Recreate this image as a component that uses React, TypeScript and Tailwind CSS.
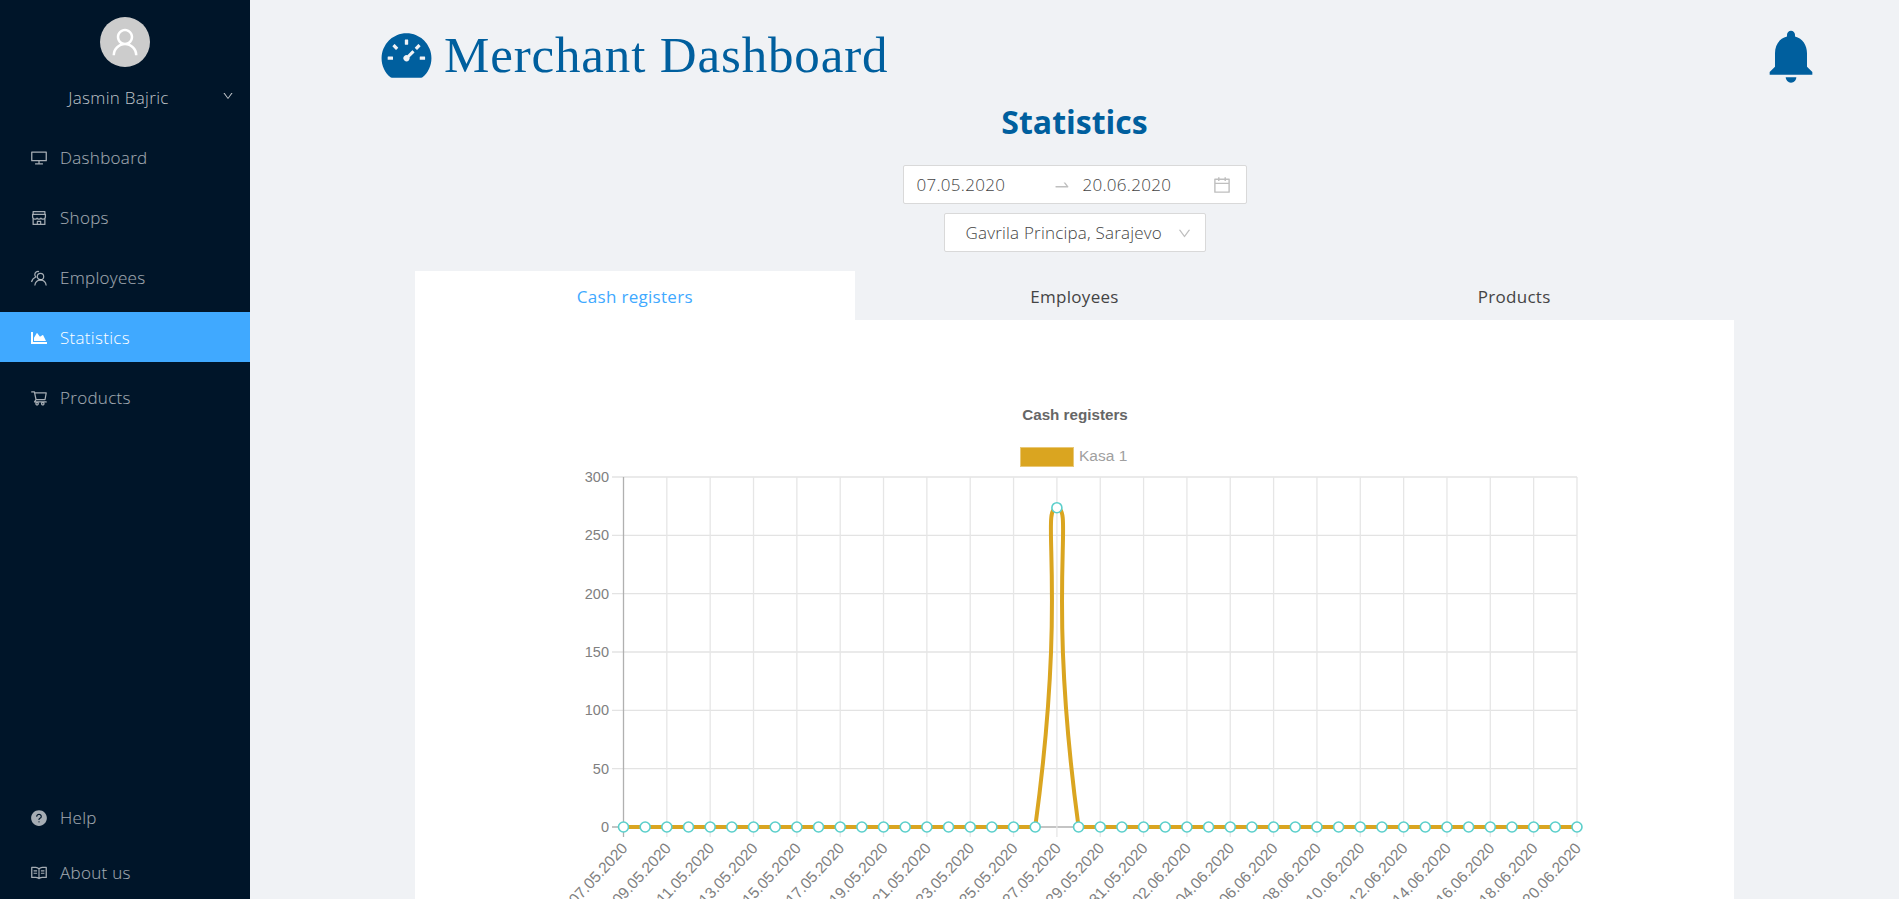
import React from 'react';
import {
  AiFillDashboard,
  AiFillQuestionCircle,
  AiOutlineCalendar,
  AiOutlineDesktop,
  AiOutlineDown,
  AiOutlineRead,
  AiOutlineShop,
  AiOutlineShoppingCart,
  AiOutlineSwapRight,
  AiOutlineUser,
} from 'react-icons/ai';
import { FaChartArea } from 'react-icons/fa';
import { MdNotifications } from 'react-icons/md';

const EmployeesIcon = () => (
  <svg viewBox="0 0 18 18" width="18" height="18" fill="none" stroke="currentColor" strokeWidth="1.2">
    <circle cx="10.5" cy="7.5" r="3.2" />
    <path d="M4.8 16.5c.4-3.2 2.6-5.4 5.7-5.4s5.300 2.200 5.700 5.400" />
    <path d="M9 2.600A3.200 3.200 0 0 0 4.800 5.600c0 1 .4 1.800 1 2.400-2.200.9-3.700 2.800-4.300 5" />
  </svg>
);

const menuItems = [
  { label: 'Dashboard', icon: <AiOutlineDesktop size={18} /> },
  { label: 'Shops', icon: <AiOutlineShop size={18} /> },
  { label: 'Employees', icon: <EmployeesIcon /> },
  { label: 'Statistics', icon: <FaChartArea size={16} />, active: true },
  { label: 'Products', icon: <AiOutlineShoppingCart size={18} /> },
];

const Sidebar = () => (
  <aside className="flex h-full w-[250px] shrink-0 flex-col justify-between bg-[#001529] text-[17px] font-light tracking-[0.3px] text-white/65">
    <div>
      <div className="flex justify-center pt-[17px]">
        <div className="flex h-[50px] w-[50px] items-center justify-center rounded-full bg-[#cccccc] text-white">
          <AiOutlineUser size={34} />
        </div>
      </div>
      <div className="relative mt-[17px] flex h-7 items-center justify-center pr-[13px] text-white/75">
        Jasmin Bajric
        <AiOutlineDown size={12} className="absolute right-[16px] top-[6px]" />
      </div>
      <nav className="mt-[20px] flex flex-col gap-2.5">
        {menuItems.map((item) => (
          <div
            key={item.label}
            className={`flex h-[50px] items-center gap-[12px] pl-[30px] pt-[2px] ${item.active ? 'bg-[#40a9ff] text-white' : ''}`}
          >
            <span className="flex w-[18px] justify-center">{item.icon}</span>
            {item.label}
          </div>
        ))}
      </nav>
    </div>
    <div className="flex flex-col gap-[15px] pb-[6px]">
      <div className="flex h-10 items-center gap-[12px] pl-[30px]">
        <AiFillQuestionCircle size={18} />
        Help
      </div>
      <div className="flex h-10 items-center gap-[12px] pl-[30px]">
        <AiOutlineRead size={18} />
        About us
      </div>
    </div>
  </aside>
);

const X0 = 623.5;
const STEP = 21.67;
const Y0 = 827;
const YTOP = 477;
const PEAK_Y = 507.7;

const pad = (n: number) => String(n).padStart(2, '0');

const dates = Array.from({ length: 45 }, (_, i) => {
  const day = 7 + i;
  return day <= 31 ? `${pad(day)}.05.2020` : `${pad(day - 31)}.06.2020`;
});

const yTicks = [0, 50, 100, 150, 200, 250, 300];
const yOf = (v: number) => Y0 - ((Y0 - YTOP) * v) / 300;
const xOf = (i: number) => X0 + STEP * i;

// spike around 27.05 with a high curve tension, flat on zero elsewhere
const linePath = `M ${xOf(0)} ${Y0} L ${xOf(19)} ${Y0} C 1067.700 587.500, 1039.900 ${PEAK_Y}, ${xOf(20)} ${PEAK_Y} C 1074.300 ${PEAK_Y}, 1046.200 587.500, ${xOf(21)} ${Y0} L ${xOf(44)} ${Y0}`;

const Chart = () => (
  <svg viewBox="415 320 1319 579" width="1319" height="579" className="block" fontFamily="'Liberation Sans', Arial, sans-serif">
    <text x="1075" y="420" textAnchor="middle" fontSize="15.200" fontWeight="700" fill="#666666">
      Cash registers
    </text>
    <rect x="1020.500" y="447.500" width="53" height="19" fill="#daa520" stroke="#e9c877" strokeWidth="1" />
    <text x="1079" y="461" fontSize="15.500" fill="#a0a0a0">
      Kasa 1
    </text>

    {yTicks.map((v) => (
      <g key={v}>
        <line x1={612} x2={1577} y1={yOf(v)} y2={yOf(v)} stroke={v === 0 ? '#b0b0b0' : '#e3e3e3'} strokeWidth="1.300" />
        <text x={609} y={yOf(v) + 5} textAnchor="end" fontSize="14.500" fill="#808080">
          {v}
        </text>
      </g>
    ))}

    {dates.map((d, i) =>
      i % 2 === 0 ? (
        <g key={d}>
          <line
            x1={xOf(i)}
            x2={xOf(i)}
            y1={YTOP}
            y2={837}
            stroke={i === 0 ? '#b0b0b0' : '#e6e6e6'}
            strokeWidth="1.300"
          />
          <text
            x={xOf(i) + 5}
            y={849}
            textAnchor="end"
            fontSize="15.500"
            fill="#808080"
            transform={`rotate(-47 ${xOf(i) + 5} 849)`}
          >
            {d}
          </text>
        </g>
      ) : null
    )}

    <path d={linePath} fill="none" stroke="#daa520" strokeWidth="4" />
    {dates.map((d, i) => (
      <circle
        key={d}
        cx={xOf(i)}
        cy={i === 20 ? PEAK_Y : Y0}
        r="5"
        fill="#ffffff"
        stroke="#5bcfcb"
        strokeWidth="1.600"
      />
    ))}
  </svg>
);

const tabs = ['Cash registers', 'Employees', 'Products'];

export default function App() {
  return (
    <div className="flex h-[899px] overflow-hidden bg-[#f0f2f5] font-['Open_Sans',sans-serif]">
      <Sidebar />
      <main className="min-w-0 flex-1">
        <header className="flex h-[100px] items-start justify-between pl-[128px] pr-[76px] pt-[24px] text-[#005f9e]">
          <div className="flex items-center gap-[9px]">
            <AiFillDashboard size={57} />
            <h1 className="-mt-[1px] font-['Liberation_Serif',serif] text-[51px] leading-[64px] tracking-[0.85px]">Merchant Dashboard</h1>
          </div>
          <MdNotifications size={64} />
        </header>

        <h2 className="mt-[2px] text-center text-[32px] font-bold leading-[40px] text-[#005f9e]">Statistics</h2>

        <div className="mt-[23px] flex flex-col items-center gap-[9px] text-[17px] font-light text-[#444444]">
          <div className="flex h-[39px] w-[344px] items-center rounded-[2px] border border-[#d9d9d9] bg-white pl-[13px] pr-[14px] pt-[1px] tracking-[0.3px]">
            <span className="w-[136px]">07.05.2020</span>
            <AiOutlineSwapRight size={18} className="text-[#bfbfbf]" />
            <span className="ml-[12px] flex-1">20.06.2020</span>
            <AiOutlineCalendar size={20} className="text-[#bfbfbf]" />
          </div>
          <div className="flex h-[39px] w-[262px] items-center justify-between rounded-[2px] border border-[#d9d9d9] bg-white pl-[21px] pr-[13px] pt-[1px] tracking-[0.2px]">
            <span>Gavrila Principa, Sarajevo</span>
            <AiOutlineDown size={15} className="text-[#bfbfbf]" />
          </div>
        </div>

        <div className="ml-[165px] mt-[19px] w-[1319px]">
          <div className="grid grid-cols-3">
            {tabs.map((tab, i) => (
              <div
                key={tab}
                className={`flex h-[49px] items-center justify-center pt-[3px] text-[17px] font-medium tracking-[0.3px] ${i === 0 ? 'bg-white text-[#40a9ff]' : 'text-[#444444]'}`}
              >
                {tab}
              </div>
            ))}
          </div>
          <div className="bg-white">
            <Chart />
          </div>
        </div>
      </main>
    </div>
  );
}
